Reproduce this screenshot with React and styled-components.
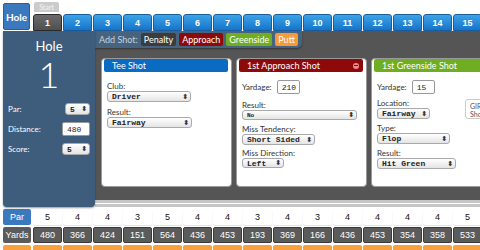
import React from 'react';
import styled, { createGlobalStyle, css } from 'styled-components';

// --- Globals ---

const GlobalStyle = createGlobalStyle`
  html, body {
    margin: 0;
    padding: 0;
    background: #fff;
    overflow: hidden;
  }
  body {
    font-family: 'Lato', 'Open Sans', sans-serif;
  }
`;

// --- Data ---

const holes = Array.from({ length: 15 }, (_, i) => i + 1);
const pars = [5, 4, 4, 3, 5, 4, 4, 3, 4, 3, 4, 4, 4, 4, 5];
const yards = [480, 366, 424, 151, 564, 436, 453, 193, 369, 166, 436, 453, 354, 358, 533];
const scores = [5, 4, 4, 3, 5, 4, 4, 4, 5, 3, 4, 4, 4, 4, 5];

const shotColors = {
  tee: '#0a6bc2',
  approach: '#8e0a0a',
  greenside: '#6fae22',
  penalty: '#3c3c3c',
  putt: '#f79a3a',
};

// --- Layout ---

const Page = styled.div`
  width: 480px;
  height: 250px;
  overflow: hidden;
  display: flex;
  flex-direction: column;

  & > * { flex: none; }
`;

const TopBar = styled.div`
  height: 31px;
  display: flex;
  align-items: flex-end;
  padding-left: 3px;
  white-space: nowrap;
`;

const HoleTab = styled.div`
  width: 27px;
  height: 27px;
  margin-bottom: 1px;
  margin-right: 3px;
  flex: none;
  background: #3a79bd;
  border: 1px solid #2c5f97;
  box-sizing: border-box;
  border-radius: 2px;
  color: #fff;
  font-size: 10px;
  font-weight: 700;
  display: flex;
  align-items: center;
  justify-content: center;
`;

const TabColumn = styled.div`
  display: flex;
  flex-direction: column;
  align-items: flex-start;
  margin-right: 1px;
  flex: none;
`;

const StartLabel = styled.div`
  width: 25px;
  height: 10px;
  margin: 0 0 2px 1px;
  background: #cbcbcb;
  border-radius: 2px 2px 0 0;
  color: #f4f4f4;
  font-size: 7px;
  display: flex;
  align-items: center;
  justify-content: center;
`;

const HoleNumberTab = styled.div`
  width: 29px;
  height: 17px;
  box-sizing: border-box;
  border-radius: 3px 3px 0 0;
  color: #fff;
  font-size: 9px;
  font-weight: 700;
  display: flex;
  align-items: center;
  justify-content: center;
  font-family: 'Liberation Sans', sans-serif;
  ${p => p.$active ? css`
    background: linear-gradient(#6a6a6a, #505050);
    border: 1px solid #2b2b2b;
  ` : css`
    background: linear-gradient(#3ba3ea, #1674c7);
    border: 1px solid #1a5c9e;
  `}
`;

const Main = styled.div`
  display: flex;
  height: 176px;
  padding-left: 3px;
`;

const HolePanel = styled.div`
  width: 92px;
  flex: none;
  background: #3e5c7b;
  border-radius: 0 0 4px 4px;
  box-shadow: 0 1px 2px rgba(0,0,0,0.4);
  color: #fff;
  display: flex;
  flex-direction: column;
  align-items: stretch;
  padding-top: 7px;
  box-sizing: border-box;
  z-index: 1;
`;

const PanelTitle = styled.div`
  text-align: center;
  font-size: 13px;
  line-height: 16px;
`;

const BigNumber = styled.div`
  text-align: center;
  font-size: 36px;
  font-weight: 300;
  line-height: 40px;
  margin-bottom: 8px;
`;

const FieldRow = styled.div`
  display: flex;
  align-items: center;
  justify-content: space-between;
  padding: 0 5px 0 5px;
  height: 14px;
  margin-bottom: 6px;
  font-size: 8px;
`;

const ShotArea = styled.div`
  flex: 1;
  min-width: 0;
  display: flex;
  flex-direction: column;
`;

const DarkStage = styled.div`
  flex: 1;
  background: #555;
  display: flex;
  flex-direction: column;
  overflow: hidden;
`;

const Scrollbar = styled.div`
  height: 7px;
  flex: none;
  background: #c6c6c6;
  border-top: 3px solid #c6c6c6;
  box-sizing: border-box;
  box-shadow: inset 0 1px 0 #fff;
`;

const AddShotBar = styled.div`
  align-self: flex-start;
  height: 17px;
  flex: none;
  display: flex;
  align-items: center;
  gap: 3px;
  padding: 0 4px 0 4px;
  background: #46637f;
  border-radius: 0 0 5px 0;
  box-shadow: 0 1px 2px rgba(0,0,0,0.4);
  font-size: 9px;
  color: #c8d3de;
  white-space: nowrap;
`;

const AddButton = styled.div`
  height: 13px;
  padding: 0 3px;
  background: ${p => p.$color};
  border-radius: 2px;
  color: #fff;
  font-size: 9px;
  display: flex;
  align-items: center;
`;

const CardRow = styled.div`
  display: flex;
  gap: 4px;
  padding: 10px 0 0 6px;
`;

const Card = styled.div`
  position: relative;
  width: 131px;
  height: 129px;
  flex: none;
  background: #fff;
  border: 1px solid #999;
  border-radius: 4px;
  box-sizing: border-box;
  padding: 0 3px 0 2px;
`;

const CardHeader = styled.div`
  height: 13px;
  background: ${p => p.$color};
  border-radius: 2px;
  color: #fff;
  font-size: 9px;
  display: flex;
  align-items: center;
  justify-content: space-between;
  padding: 0 4px 0 8px;
  margin-bottom: 8px;
`;

const RemoveDot = styled.span`
  width: 6px;
  height: 6px;
  border-radius: 50%;
  background: #f08a8a;
  position: relative;
  &::after {
    content: '';
    position: absolute;
    left: 1px;
    right: 1px;
    top: 2.5px;
    height: 1px;
    background: #8e0a0a;
  }
`;

const CardBody = styled.div`
  padding: 0 2px 0 3px;
  display: flex;
  flex-direction: column;
`;

const Label = styled.div`
  font-size: 8px;
  color: #333;
  line-height: 9px;
  margin-top: ${p => p.$top || 0}px;
`;

const InlineField = styled.div`
  display: flex;
  align-items: center;
  gap: 5px;
  font-size: 8px;
  color: #333;
`;

const Select = styled.div`
  width: ${p => p.$w}px;
  height: ${p => p.$h || 11}px;
  box-sizing: border-box;
  border: 1px solid #a9a9a9;
  border-radius: 3px;
  background: linear-gradient(#fff, #e4e4e4);
  display: flex;
  align-items: center;
  justify-content: space-between;
  padding: 0 2px 0 4px;
  font-family: 'Liberation Mono', monospace;
  font-weight: 700;
  font-size: ${p => p.$small ? 6 : 8}px;
  color: #222;
  white-space: nowrap;
  &::after {
    content: '⬍';
    font-size: 7px;
    font-family: 'DejaVu Sans', sans-serif;
    color: #333;
  }
`;

const TextInput = styled.div`
  width: ${p => p.$w}px;
  height: 14px;
  box-sizing: border-box;
  border: 1px solid #999;
  border-radius: 2px;
  background: #fff;
  display: flex;
  align-items: center;
  padding-left: 4px;
  font-family: 'Liberation Mono', monospace;
  font-size: 8px;
  color: #222;
`;

const GirBox = styled.div`
  position: absolute;
  left: 93px;
  top: 40px;
  width: 30px;
  height: 20px;
  border: 1px solid #ccc;
  border-radius: 3px;
  font-size: 7px;
  color: #555;
  padding: 2px 0 0 4px;
  box-sizing: border-box;
  line-height: 8px;
  white-space: nowrap;
  overflow: hidden;
`;

const Scorecard = styled.div`
  display: flex;
  flex-direction: column;
  gap: 2px;
  padding: 2px 0 0 3px;
  font-family: 'Liberation Sans', sans-serif;
`;

const ScoreRow = styled.div`
  display: flex;
  gap: 1px;
  height: 16px;
  flex: none;
`;

const RowLabel = styled.div`
  width: 28px;
  flex: none;
  margin-right: 1px;
  border-radius: 2px;
  font-size: 9px;
  color: #fff;
  display: flex;
  align-items: center;
  justify-content: center;
  background: ${p => p.$bg};
`;

const Cell = styled.div`
  width: 29px;
  flex: none;
  box-sizing: border-box;
  border-radius: 2px;
  font-size: 9px;
  display: flex;
  align-items: center;
  justify-content: center;
  ${p => p.$kind === 'par' && css`
    background: #fff;
    color: #111;
    box-shadow: 0 1px 1px rgba(0,0,0,0.12);
  `}
  ${p => p.$kind === 'yards' && css`
    background: #5b5b5b;
    border: 1px solid #3a3a3a;
    color: #fff;
  `}
  ${p => p.$kind === 'score' && css`
    background: #f8a13c;
    color: #fff;
  `}
`;

// --- The App ---

export default function App() {
  return (
    <>
      <GlobalStyle />
      <Page>
        <TopBar>
          <HoleTab>Hole</HoleTab>
          {holes.map(n => (
            <TabColumn key={n}>
              {n === 1 && <StartLabel>Start</StartLabel>}
              <HoleNumberTab $active={n === 1}>{n}</HoleNumberTab>
            </TabColumn>
          ))}
        </TopBar>

        <Main>
          <HolePanel>
            <PanelTitle>Hole</PanelTitle>
            <BigNumber>1</BigNumber>
            <FieldRow>
              <span>Par:</span>
              <Select $w={25} $h={12}>5</Select>
            </FieldRow>
            <FieldRow>
              <span>Distance:</span>
              <TextInput $w={28}>480</TextInput>
            </FieldRow>
            <FieldRow>
              <span>Score:</span>
              <Select $w={28} $h={12}>5</Select>
            </FieldRow>
          </HolePanel>

          <ShotArea>
            <DarkStage>
              <AddShotBar>
                Add Shot:
                <AddButton $color={shotColors.penalty}>Penalty</AddButton>
                <AddButton $color={shotColors.approach}>Approach</AddButton>
                <AddButton $color={shotColors.greenside}>Greenside</AddButton>
                <AddButton $color={shotColors.putt}>Putt</AddButton>
              </AddShotBar>

              <CardRow>
                <Card>
                  <CardHeader $color={shotColors.tee}>Tee Shot</CardHeader>
                  <CardBody>
                    <Label $top={2}>Club:</Label>
                    <Select $w={84}>Driver</Select>
                    <Label $top={6}>Result:</Label>
                    <Select $w={85}>Fairway</Select>
                  </CardBody>
                </Card>

                <Card>
                  <CardHeader $color={shotColors.approach}>
                    1st Approach Shot
                    <RemoveDot />
                  </CardHeader>
                  <CardBody>
                    <InlineField>
                      Yardage:
                      <TextInput $w={23}>210</TextInput>
                    </InlineField>
                    <Label $top={7}>Result:</Label>
                    <Select $w={115} $h={10} $small>No</Select>
                    <Label $top={5}>Miss Tendency:</Label>
                    <Select $w={73}>Short Sided</Select>
                    <Label $top={4}>Miss Direction:</Label>
                    <Select $w={42} $h={10}>Left</Select>
                  </CardBody>
                </Card>

                <Card>
                  <CardHeader $color={shotColors.greenside}>1st Greenside Shot</CardHeader>
                  <CardBody>
                    <InlineField>
                      Yardage:
                      <TextInput $w={23}>15</TextInput>
                    </InlineField>
                    <Label $top={5}>Location:</Label>
                    <Select $w={53}>Fairway</Select>
                    <Label $top={5}>Type:</Label>
                    <Select $w={73}>Flop</Select>
                    <Label $top={5}>Result:</Label>
                    <Select $w={79}>Hit Green</Select>
                  </CardBody>
                  <GirBox>GIR /<br />Shot</GirBox>
                </Card>
              </CardRow>
            </DarkStage>
            <Scrollbar />
          </ShotArea>
        </Main>

        <Scorecard>
          <ScoreRow>
            <RowLabel $bg="#3a79bd">Par</RowLabel>
            {pars.map((v, i) => <Cell key={i} $kind="par">{v}</Cell>)}
          </ScoreRow>
          <ScoreRow>
            <RowLabel $bg="#5b5b5b">Yards</RowLabel>
            {yards.map((v, i) => <Cell key={i} $kind="yards">{v}</Cell>)}
          </ScoreRow>
          <ScoreRow>
            <RowLabel $bg="#f8a13c">Score</RowLabel>
            {scores.map((v, i) => <Cell key={i} $kind="score">{v}</Cell>)}
          </ScoreRow>
        </Scorecard>
      </Page>
    </>
  );
}
